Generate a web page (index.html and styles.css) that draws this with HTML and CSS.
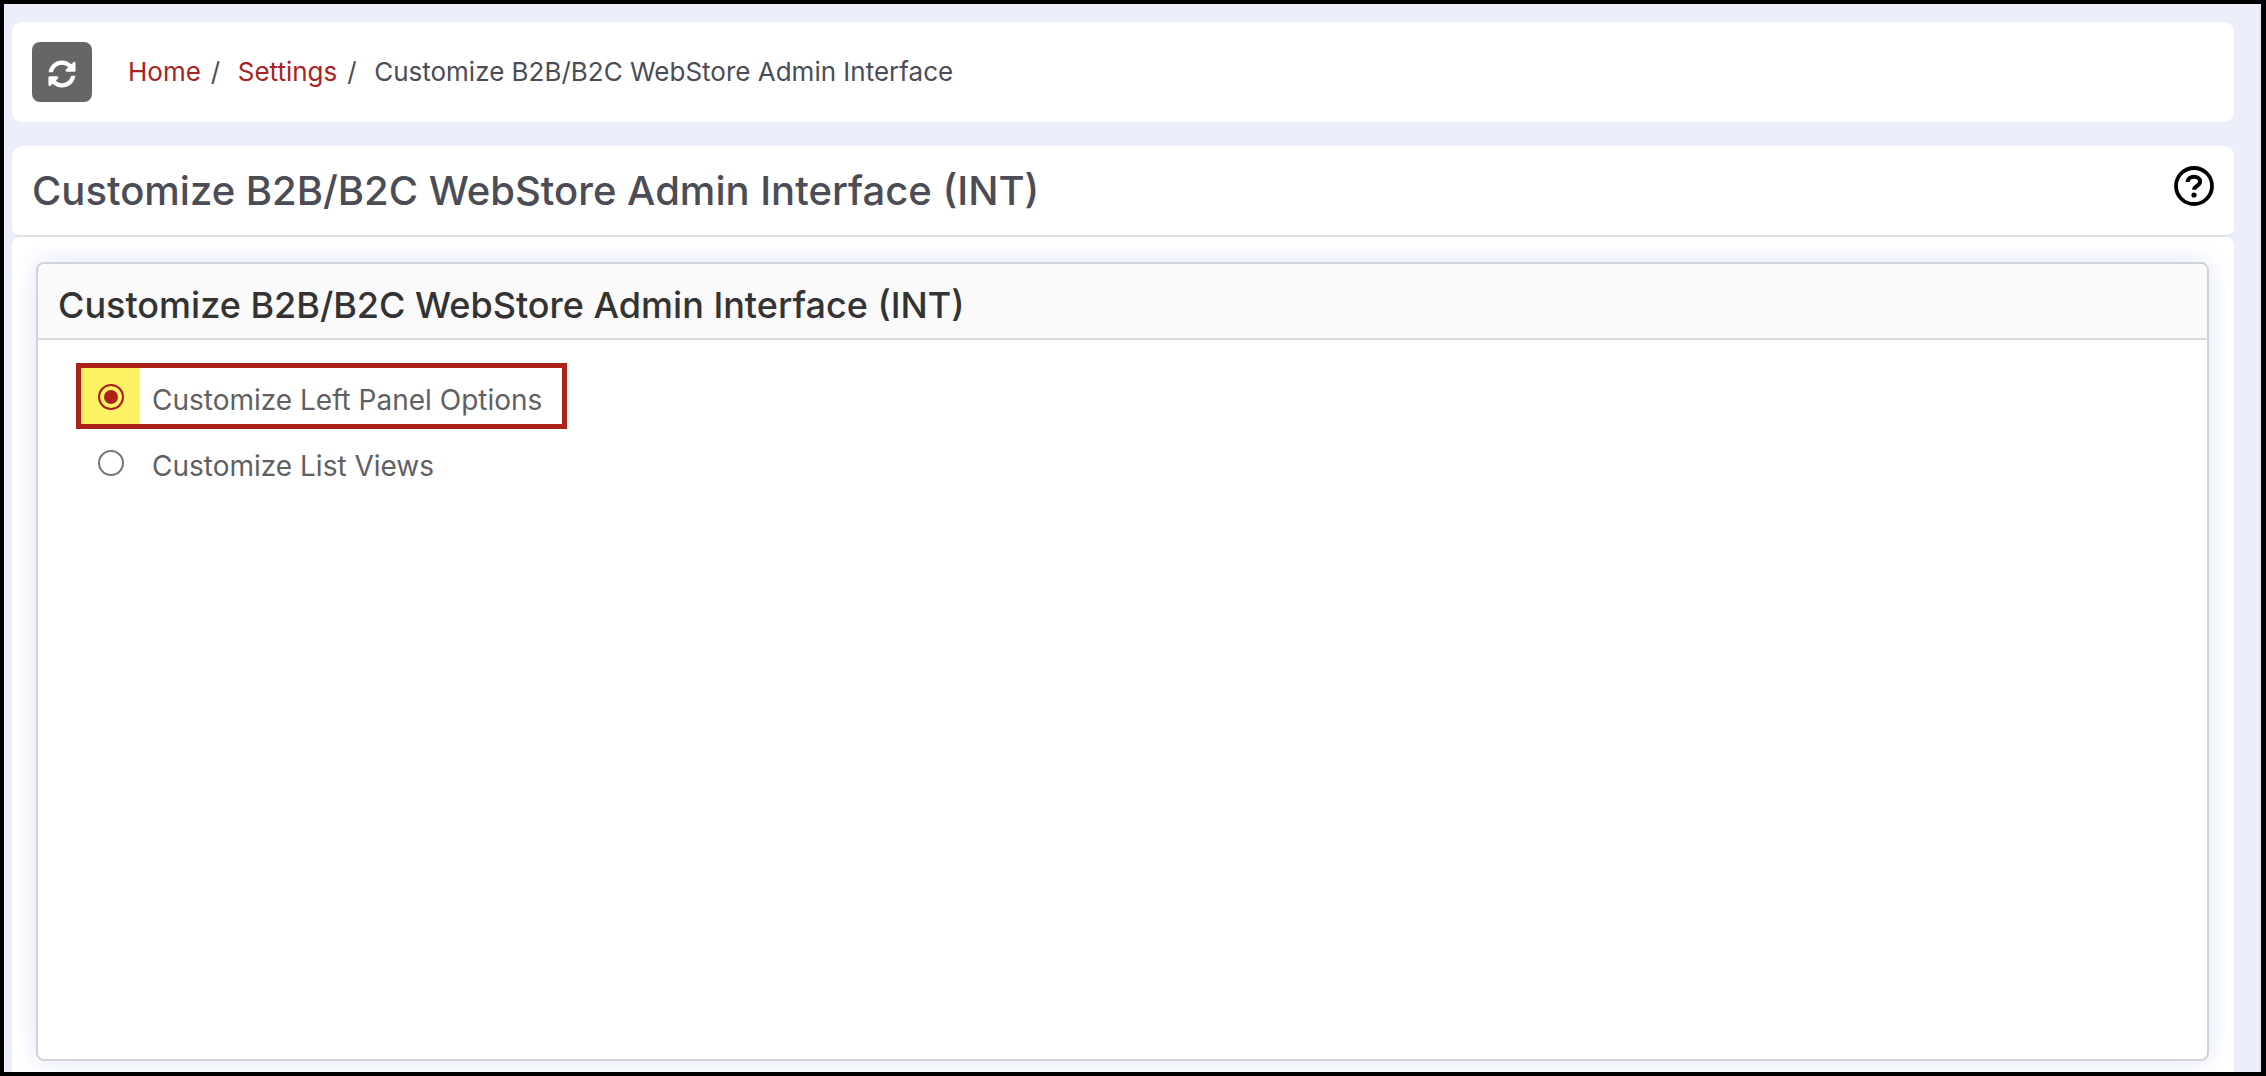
FILE: index.html
```html
<!DOCTYPE html>
<html lang="en">
<head>
  <meta charset="UTF-8">
  <title>Customize B2B/B2C WebStore Admin Interface</title>
  <link rel="stylesheet" href="styles.css">
</head>
<body>

<div class="page">
  <!-- Breadcrumb bar -->
  <div class="crumb-bar">
    <button class="refresh-btn" type="button" aria-label="Refresh">
      <svg class="refresh-icon" viewBox="0 0 512 512"><path fill="#fff" d="M370.72 133.28C339.458 104.008 298.888 87.962 255.848 88c-77.458.068-144.328 53.178-162.791 126.85-1.344 5.363-6.122 9.15-11.651 9.15H24.103c-7.498 0-13.194-6.807-11.807-14.176C33.933 94.924 134.813 8 256 8c66.448 0 126.791 26.136 171.315 68.685L463.03 40.97C478.149 25.851 504 36.559 504 57.941V192c0 13.255-10.745 24-24 24H345.941c-21.382 0-32.09-25.851-16.971-40.971l41.75-41.749zM32 296h134.059c21.382 0 32.09 25.851 16.971 40.971l-41.75 41.75c31.262 29.273 71.835 45.319 114.876 45.28 77.418-.07 144.315-53.144 162.787-126.849 1.344-5.363 6.122-9.15 11.651-9.15h57.304c7.498 0 13.194 6.807 11.807 14.176C478.067 417.076 377.187 504 256 504c-66.448 0-126.791-26.136-171.315-68.685L48.97 471.03C33.851 486.149 8 475.441 8 454.059V320c0-13.255 10.745-24 24-24z"/></svg>
    </button>
    <nav class="crumbs">
      <a href="#">Home</a><span class="sep">/</span>
      <a href="#">Settings</a><span class="sep">/</span>
      <span class="crumb-current">Customize B2B/B2C WebStore Admin Interface</span>
    </nav>
  </div>

  <!-- Page title -->
  <div class="title-bar">
    <h1>Customize B2B/B2C WebStore Admin Interface (INT)</h1>
    <svg class="help-icon" viewBox="0 0 40 40">
      <circle cx="20" cy="20" r="18" fill="none" stroke="#000" stroke-width="3.8"/>
      <path d="M13.6 16c.2-3.400 2.800-5.300 6.400-5.300 3.500 0 6.100 2 6.100 4.800 0 2.200-1.300 3.300-3.200 4.500-1.800 1.100-2.800 2-2.800 3.800" fill="none" stroke="#000" stroke-width="4"/>
      <circle cx="20" cy="29" r="2.600"/>
    </svg>
  </div>

  <div class="content">
    <div class="panel">
      <div class="panel-head">Customize B2B/B2C WebStore Admin Interface (INT)</div>
      <div class="panel-body">
        <label class="option option-marked">
          <span class="radio-cell"><span class="radio radio-on"></span></span>
          <span class="option-text">Customize Left Panel Options</span>
        </label>
        <label class="option">
          <span class="radio-cell"><span class="radio"></span></span>
          <span class="option-text">Customize List Views</span>
        </label>
      </div>
    </div>
  </div>
</div>

</body>
</html>
```

FILE: styles.css
```css
html, body {
  margin: 0;
  height: 100%;
}

body {
  box-sizing: border-box;
  height: 1076px;
  border: solid #000;
  border-width: 4px 5px 4px 4px;
  overflow: hidden;
  background: #eceffa;
  font-family: Inter, "Noto Sans", sans-serif;
}

.page {
  box-sizing: border-box;
  height: 100%;
  padding: 18px 25px 0 8px;
  border-right: 2px solid #e7e9f5;
  display: flex;
  flex-direction: column;
}

/* Breadcrumb bar */
.crumb-bar {
  display: flex;
  align-items: center;
  height: 100px;
  padding-left: 20px;
  background: #fff;
  border-radius: 10px;
  flex: none;
}

.refresh-btn {
  width: 60px;
  height: 60px;
  padding: 0;
  border: 0;
  border-radius: 8px;
  background: #666;
  display: flex;
  align-items: center;
  justify-content: center;
}

.refresh-icon {
  width: 28px;
  height: 28px;
  margin-top: 4px;
}

.crumbs {
  margin: -1px 0 0 36px;
  font-size: 26px;
  color: #4b4c55;
  display: flex;
  align-items: center;
}

.crumbs a {
  color: #a82323;
  text-decoration: none;
}

.sep {
  margin: 0 17.5px 0 10px;
}

/* Title */
.title-bar {
  display: flex;
  align-items: center;
  justify-content: space-between;
  height: 89px;
  margin-top: 24px;
  padding: 0 20px;
  background: #fff;
  border-radius: 10px 10px 8px 8px;
  border-bottom: 2px solid #e2e3ea;
  flex: none;
}

.title-bar h1 {
  margin: 0;
  font-size: 40px;
  font-weight: 500;
  color: #4b4c55;
}

.help-icon {
  width: 40px;
  height: 40px;
  margin-top: -10px;
}

/* Content panel */
.content {
  flex: 1;
  padding: 25px 25px 11px 24px;
  background: #fff;
  border-radius: 8px 8px 0 0;
  display: flex;
}

.panel {
  flex: 1;
  background: #fff;
  border: 2px solid #d2d3d9;
  border-radius: 8px;
  box-shadow: 0 0 26px #dfe4fa;
}

.panel-head {
  height: 74px;
  line-height: 82px;
  padding-left: 20px;
  font-size: 36px;
  font-weight: 500;
  color: #333;
  background: #fafafa;
  border-bottom: 2px solid #d8d8dc;
  border-radius: 8px 8px 0 0;
}

.panel-body {
  padding: 23px 0 0 38px;
}

.option {
  box-sizing: border-box;
  display: flex;
  align-items: center;
  width: 491px;
  height: 66px;
  font-size: 28px;
  line-height: 34px;
  color: #606064;
  border: 5px solid transparent;
}

.option-text {
  margin-top: 8px;
}

.option-marked {
  border-color: #ab2318;
}

.radio-cell {
  width: 59px;
  margin-right: 12px;
  align-self: stretch;
  display: flex;
  align-items: center;
  justify-content: center;
  flex: none;
}

.option-marked .radio-cell {
  background: #fdf264;
}

.radio {
  box-sizing: border-box;
  width: 26px;
  height: 26px;
  margin-top: 2px;
  border: 2px solid #767676;
  border-radius: 50%;
  background: #fff;
}

.radio-on {
  border: 2px solid #ab2318;
  background: #ab2318;
  box-shadow: inset 0 0 0 4px #fdf264;
}
```
